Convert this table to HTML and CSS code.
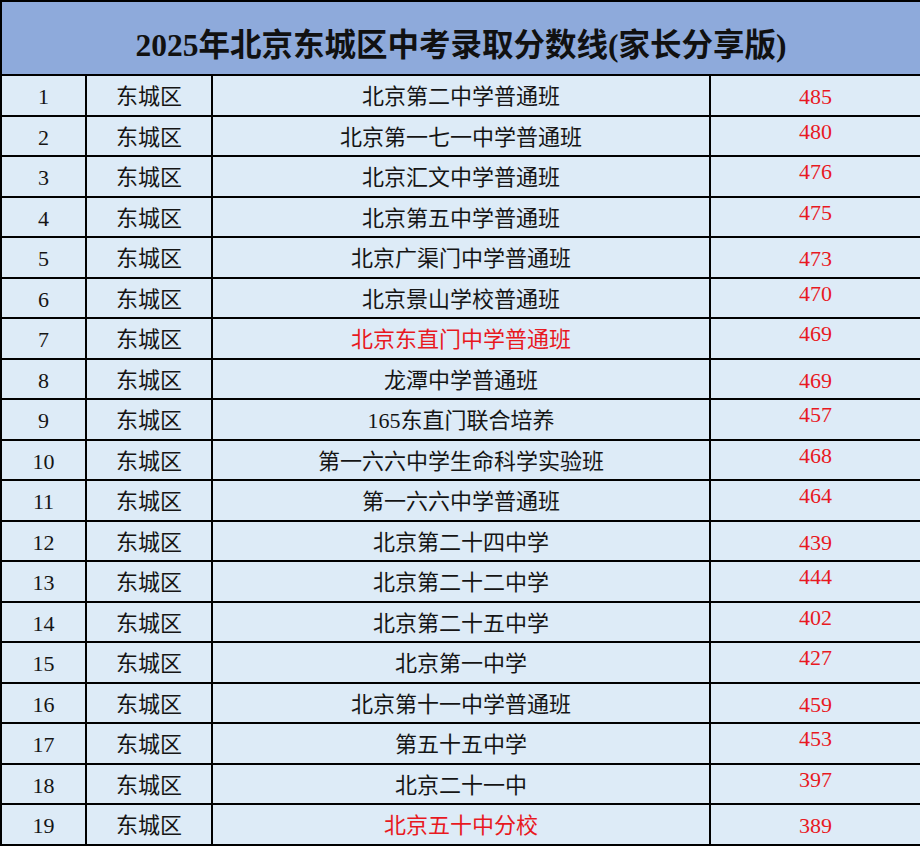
FILE: index.html
```html
<!DOCTYPE html>
<html lang="zh-CN">
<head>
<meta charset="utf-8">
<title>2025年北京东城区中考录取分数线</title>
<link rel="stylesheet" href="styles.css">
</head>
<body>
<table class="scores">
  <colgroup>
    <col class="c-no"><col class="c-dist"><col class="c-school"><col class="c-score">
  </colgroup>
  <thead>
    <tr class="head"><th colspan="4">2025年北京东城区中考录取分数线(家长分享版)</th></tr>
  </thead>
  <tbody>
    <tr><td>1</td><td>东城区</td><td>北京第二中学普通班</td><td class="score">485</td></tr>
    <tr><td>2</td><td>东城区</td><td>北京第一七一中学普通班</td><td class="score hi">480</td></tr>
    <tr><td>3</td><td>东城区</td><td>北京汇文中学普通班</td><td class="score hi">476</td></tr>
    <tr><td>4</td><td>东城区</td><td>北京第五中学普通班</td><td class="score hi">475</td></tr>
    <tr><td>5</td><td>东城区</td><td>北京广渠门中学普通班</td><td class="score">473</td></tr>
    <tr><td>6</td><td>东城区</td><td>北京景山学校普通班</td><td class="score hi">470</td></tr>
    <tr><td>7</td><td>东城区</td><td class="red">北京东直门中学普通班</td><td class="score hi">469</td></tr>
    <tr><td>8</td><td>东城区</td><td>龙潭中学普通班</td><td class="score">469</td></tr>
    <tr><td>9</td><td>东城区</td><td>165东直门联合培养</td><td class="score hi">457</td></tr>
    <tr><td>10</td><td>东城区</td><td>第一六六中学生命科学实验班</td><td class="score hi">468</td></tr>
    <tr><td>11</td><td>东城区</td><td>第一六六中学普通班</td><td class="score hi">464</td></tr>
    <tr><td>12</td><td>东城区</td><td>北京第二十四中学</td><td class="score">439</td></tr>
    <tr><td>13</td><td>东城区</td><td>北京第二十二中学</td><td class="score hi">444</td></tr>
    <tr><td>14</td><td>东城区</td><td>北京第二十五中学</td><td class="score hi">402</td></tr>
    <tr><td>15</td><td>东城区</td><td>北京第一中学</td><td class="score hi">427</td></tr>
    <tr><td>16</td><td>东城区</td><td>北京第十一中学普通班</td><td class="score">459</td></tr>
    <tr><td>17</td><td>东城区</td><td>第五十五中学</td><td class="score hi">453</td></tr>
    <tr><td>18</td><td>东城区</td><td>北京二十一中</td><td class="score hi">397</td></tr>
    <tr><td>19</td><td>东城区</td><td class="red">北京五十中分校</td><td class="score">389</td></tr>
  </tbody>
</table>
</body>
</html>
```
FILE: styles.css
```css
html, body {
  margin: 0;
  padding: 0;
  background: #ffffff;
}
.scores {
  width: 920px;
  border-collapse: collapse;
  table-layout: fixed;
  font-family: "Liberation Serif", "Noto Sans CJK SC", serif;
  color: #151515;
}
.c-no { width: 85px; }
.c-dist { width: 126px; }
.c-school { width: 498px; }
.c-score { width: 211px; }
.scores th, .scores td {
  border: 2px solid #000;
  text-align: center;
  padding: 0;
}
.head th {
  height: 74px;
  background: #8eaadb;
  font-size: 31.5px;
  font-weight: bold;
  color: #111;
  padding-top: 8px;
  box-sizing: border-box;
}
.scores tbody tr {
  height: 40.5px;
}
.scores td {
  background: #ddebf7;
  font-size: 22px;
  padding-top: 4px;
  line-height: 1;
}
.scores td.score {
  color: #e8191f;
}
.scores td.score.hi {
  padding-top: 0;
  padding-bottom: 8px;
}
.scores td.red {
  color: #e8191f;
}
```
